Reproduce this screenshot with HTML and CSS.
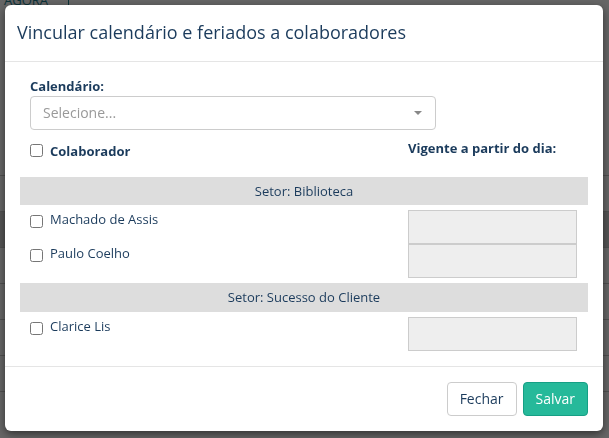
FILE: index.html
```html
<!DOCTYPE html>
<html lang="pt-BR">
  <head>
    <meta charset="UTF-8" />
    <meta name="viewport" content="width=device-width, initial-scale=1.0" />
    <title>Calendários</title>
    <link rel="stylesheet" href="styles.css">
  </head>
  <body>
    <!-- página por trás do modal -->
    <div class="page">
      <div class="page-top">
        <a href="#" class="page-link">AGORA</a>
        <span class="page-sep"></span>
      </div>
      <div class="page-rows">
        <div class="page-row"></div>
        <div class="page-row"></div>
        <div class="page-row page-row-dark"></div>
        <div class="page-row"></div>
        <div class="page-row"></div>
        <div class="page-row"></div>
        <div class="page-row"></div>
      </div>
    </div>

    <div class="backdrop"></div>

    <div class="modal">
      <div class="modal-header">
        <h4 class="modal-title">Vincular calendário e feriados a colaboradores</h4>
      </div>

      <div class="modal-body">
        <div class="field">
          <label class="field-label">Calendário:</label>
          <div class="select">
            <span class="select-placeholder">Selecione...</span>
            <span class="select-caret"></span>
          </div>
        </div>

        <div class="list-head">
          <label class="check check-strong">
            <input type="checkbox" />
            <span>Colaborador</span>
          </label>
          <span class="date-title">Vigente a partir do dia:</span>
        </div>

        <div class="sector sector-first">
          <div class="sector-title">Setor: Biblioteca</div>
          <div class="people">
            <div class="person">
              <label class="check">
                <input type="checkbox" />
                <span>Machado de Assis</span>
              </label>
              <input type="text" class="date-input" readonly />
            </div>
            <div class="person">
              <label class="check">
                <input type="checkbox" />
                <span>Paulo Coelho</span>
              </label>
              <input type="text" class="date-input" readonly />
            </div>
          </div>
        </div>

        <div class="sector">
          <div class="sector-title">Setor: Sucesso do Cliente</div>
          <div class="people">
            <div class="person">
              <label class="check">
                <input type="checkbox" />
                <span>Clarice Lis</span>
              </label>
              <input type="text" class="date-input" readonly />
            </div>
          </div>
        </div>
      </div>

      <div class="modal-footer">
        <button class="btn btn-default">Fechar</button>
        <button class="btn btn-success">Salvar</button>
      </div>
    </div>
  </body>
</html>
```

FILE: styles.css
```css
/* Reset CSS */
* {
  box-sizing: border-box;
}

body {
  margin: 0;
  height: 438px;
  overflow: hidden;
  font-family: "Open Sans", "Liberation Sans", sans-serif;
  font-size: 13px;
  line-height: 1.42857;
  color: #1b3b5c;
  background-color: #fff;
}

/* Página de fundo */
.page {
  height: 100%;
}

.page-top {
  display: flex;
  align-items: flex-start;
  height: 10px;
  overflow: hidden;
}

.page-link {
  margin: -9px 0 0 4px;
  font-size: 13px;
  color: #1f7f8f;
  text-decoration: none;
  border-bottom: 1px solid #1f7f8f;
}

.page-sep {
  width: 1px;
  height: 10px;
  margin-left: 20px;
  background-color: #1f7f8f;
}

.page-rows {
  margin-top: 130px;
}

.page-row {
  height: 36px;
  border-bottom: 1px solid #c8c8c8;
}

.page-row-dark {
  background-color: #d5d5d5;
}

.backdrop {
  position: fixed;
  inset: 0;
  background-color: rgba(0, 0, 0, 0.6);
}

/* Modal */
.modal {
  position: absolute;
  top: 5px;
  left: 5px;
  width: 598px;
  background-color: #fff;
  border-radius: 6px;
  box-shadow: 0 3px 9px rgba(0, 0, 0, 0.5);
}

.modal-header {
  padding: 15px 12px;
  border-bottom: 1px solid #e5e5e5;
}

.modal-title {
  margin: 0;
  font-size: 18px;
  font-weight: normal;
  line-height: 1.42857;
}

.modal-body {
  padding: 15px;
}

.modal-footer {
  display: flex;
  justify-content: flex-end;
  gap: 6px;
  padding: 15px;
  border-top: 1px solid #e5e5e5;
}

/* Campo de calendário */
.field {
  padding: 0 10px;
}

.field-label {
  display: block;
  margin-bottom: 1px;
  font-weight: bold;
}

.select {
  display: flex;
  align-items: center;
  justify-content: space-between;
  width: 406px;
  height: 34px;
  padding: 0 12px;
  border: 1px solid #ccc;
  border-radius: 4px;
}

.select-placeholder {
  font-size: 14px;
  color: #999;
}

.select-caret {
  margin-right: 1px;
  border-style: solid;
  border-width: 4px 4px 0 4px;
  border-color: #888 transparent transparent transparent;
}

/* Lista de colaboradores */
.list-head,
.person {
  display: grid;
  grid-template-columns: 1fr 169px;
  padding: 0 11px 0 10px;
}

.list-head {
  margin-top: 12px;
}

.date-title {
  margin-top: -3px;
  font-weight: bold;
}

.check {
  display: flex;
  align-items: flex-start;
  gap: 7px;
}

.check input {
  width: 13px;
  height: 13px;
  margin: 2px 0 0;
}

.check-strong {
  font-weight: bold;
}

.sector {
  margin-top: 5px;
}

.sector-first {
  margin-top: 16px;
}

.sector-title {
  padding: 5px;
  text-align: center;
  background-color: #ddd;
}

.people {
  padding-top: 5px;
}

.person .check input {
  margin-top: 5px;
}

.date-input {
  width: 169px;
  height: 34px;
  margin: 0;
  background-color: #eee;
  border: 1px solid #ccc;
}

/* Botões */
.btn {
  height: 34px;
  padding: 6px 12px;
  font-family: inherit;
  font-size: 14px;
  line-height: 20px;
  border: 1px solid transparent;
  border-radius: 4px;
}

.btn-default {
  color: #1b3b5c;
  background-color: #fff;
  border-color: #ccc;
}

.btn-success {
  color: #fff;
  background-color: #26b99a;
  border-color: #169f85;
}
```
